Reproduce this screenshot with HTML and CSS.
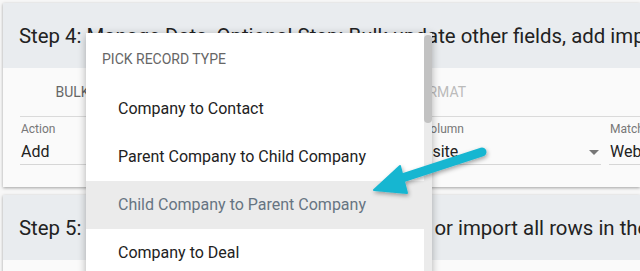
FILE: index.html
```html
<!DOCTYPE html>
<html lang="en">
<head>
    <meta charset="UTF-8">
    <title>Import</title>
    <link rel="stylesheet" href="styles.css">
</head>
<body>
    <div class="card">
        <div class="card-header">Step 4: Manage Data, Optional Step: Bulk update other fields, add import tags</div>
        <div class="card-body">
            <div class="tabs">
                <span class="tab">Bulk update</span>
                <span class="tab">Add tags</span>
                <span class="tab disabled">Date format</span>
            </div>
            <div class="fields">
                <div class="field field-action">
                    <label>Action</label>
                    <div class="value">Add</div>
                </div>
                <div class="field field-column">
                    <label>CSV Column</label>
                    <div class="value">Website <span class="caret"></span></div>
                </div>
                <div class="field field-match">
                    <label>Match</label>
                    <div class="value">Website</div>
                </div>
            </div>
        </div>
    </div>
    <div class="card">
        <div class="card-header">Step 5: Select which rows you want to import, or import all rows in the file</div>
        <div class="card-body"></div>
    </div>

    <div class="menu">
        <div class="menu-title">Pick record type</div>
        <div class="menu-item">Company to Contact</div>
        <div class="menu-item">Parent Company to Child Company</div>
        <div class="menu-item active">Child Company to Parent Company</div>
        <div class="menu-item">Company to Deal</div>
        <div class="scrollbar"><div class="thumb"></div></div>
    </div>

    <svg class="arrow" width="640" height="271" viewBox="0 0 640 271">
        <defs>
            <filter id="shadow" x="-20%" y="-20%" width="140%" height="140%">
                <feDropShadow dx="1" dy="2" stdDeviation="2" flood-opacity="0.35"/>
            </filter>
        </defs>
        <g filter="url(#shadow)" fill="#19b6d1" stroke="#19b6d1">
            <line x1="482" y1="152" x2="396" y2="180" stroke-width="9" stroke-linecap="round"/>
            <polygon points="374,190 400,166 407,193" stroke-width="2" stroke-linejoin="round"/>
        </g>
    </svg>
</body>
</html>
```

FILE: styles.css
```css
body {
    margin: 0;
    padding: 3px 0 0 3px;
    background-color: #f7f7f7;
    font-family: Roboto, "Noto Sans", sans-serif;
    color: #222;
    overflow: hidden;
    height: 271px;
    box-sizing: border-box;
}
.card {
    background-color: #fafafa;
    box-shadow: 0 1px 3px rgba(0, 0, 0, 0.35);
    margin-bottom: 8px;
    white-space: nowrap;
    overflow: hidden;
}
.card-header {
    background-color: #e9ecef;
    height: 65px;
    line-height: 66px;
    padding-left: 16px;
    font-size: 20.4px;
    color: #222;
}
.card-body {
    height: 119px;
    padding: 0 0 0 17px;
}
.tabs {
    display: flex;
    height: 48px;
    align-items: center;
    border-bottom: 1px solid #dadada;
    font-size: 14px;
    text-transform: uppercase;
    color: #666;
}
.tab {
    width: 160px;
    text-align: center;
}
.tab.disabled {
    color: #bbb;
}
.fields {
    display: flex;
    padding-top: 5px;
}
.field {
    flex-shrink: 0;
}
.field label {
    display: block;
    font-size: 12px;
    color: #777;
    padding-left: 1px;
    height: 15px;
}
.field .value {
    position: relative;
    font-size: 16px;
    height: 27px;
    line-height: 30px;
    border-bottom: 1px solid #d6d6d6;
    padding-left: 1px;
}
.field-action {
    width: 66px;
    margin-right: 314px;
}
.field-column {
    width: 201px;
    margin-right: 8px;
}
.field-column label {
    padding-left: 0;
    margin-left: -3px;
}
.caret {
    position: absolute;
    right: 2px;
    top: 13px;
    border-left: 5px solid transparent;
    border-right: 5px solid transparent;
    border-top: 5px solid #777;
}
.field-match {
    width: 100px;
}
.menu {
    position: absolute;
    left: 86px;
    top: 33px;
    width: 338px;
    height: 260px;
    padding-right: 8px;
    background-color: #fff;
    box-shadow: 0 2px 8px rgba(0, 0, 0, 0.3);
}
.menu-title {
    height: 52px;
    line-height: 52px;
    padding-left: 16px;
    font-size: 14px;
    text-transform: uppercase;
    color: #666;
}
.menu-item {
    height: 48px;
    line-height: 48px;
    padding-left: 32px;
    font-size: 16px;
    color: #222;
}
.menu-item.active {
    background-color: #ebebeb;
    color: #667482;
}
.scrollbar {
    position: absolute;
    top: 0;
    right: 0;
    width: 8px;
    height: 100%;
    background-color: #ebebeb;
}
.thumb {
    margin-top: 2px;
    height: 88px;
    background-color: #c2c2c2;
    border-radius: 4px;
}
.arrow {
    position: absolute;
    left: 0;
    top: 0;
    pointer-events: none;
}
```
